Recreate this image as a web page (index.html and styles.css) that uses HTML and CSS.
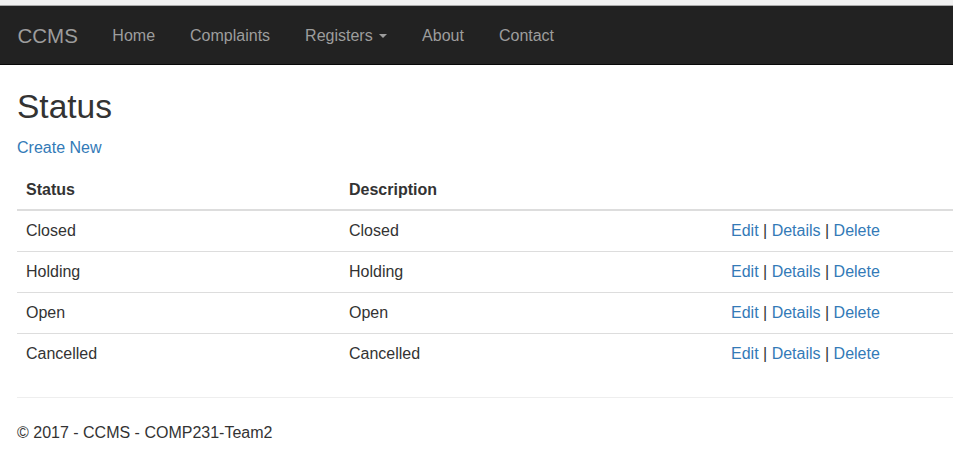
FILE: index.html
```html
<!DOCTYPE html>
<html>
<head>
<meta charset="utf-8">
<title>Status - CCMS</title>
<link rel="stylesheet" href="styles.css">
</head>
<body>
<div class="topstrip"></div>
<nav class="navbar">
  <a class="brand" href="#">CCMS</a>
  <ul class="nav">
    <li><a href="#">Home</a></li>
    <li><a href="#">Complaints</a></li>
    <li><a href="#">Registers <span class="caret"></span></a></li>
    <li><a href="#">About</a></li>
    <li><a href="#">Contact</a></li>
  </ul>
</nav>
<div class="container">
  <h1 class="title">Status</h1>
  <p class="create"><a href="#">Create New</a></p>
  <table class="table">
    <thead>
      <tr><th class="c1">Status</th><th class="c2">Description</th><th class="c3"></th></tr>
    </thead>
    <tbody>
      <tr><td>Closed</td><td>Closed</td><td><a href="#">Edit</a> | <a href="#">Details</a> | <a href="#">Delete</a></td></tr>
      <tr><td>Holding</td><td>Holding</td><td><a href="#">Edit</a> | <a href="#">Details</a> | <a href="#">Delete</a></td></tr>
      <tr><td>Open</td><td>Open</td><td><a href="#">Edit</a> | <a href="#">Details</a> | <a href="#">Delete</a></td></tr>
      <tr><td>Cancelled</td><td>Cancelled</td><td><a href="#">Edit</a> | <a href="#">Details</a> | <a href="#">Delete</a></td></tr>
    </tbody>
  </table>
  <hr class="rule">
  <footer class="footer"><p>&copy; 2017 - CCMS - COMP231-Team2</p></footer>
</div>
</body>
</html>
```
FILE: styles.css
```css
html, body {
  margin: 0;
  padding: 0;
  overflow: hidden;
}
body {
  font-family: "Liberation Sans", Arial, Helvetica, sans-serif;
  font-size: 16px;
  line-height: 22px;
  color: #333;
  background: #fff;
}
a {
  color: #337ab7;
  text-decoration: none;
}
.topstrip {
  height: 5px;
  background: #f1f1f1;
  border-bottom: 1px solid #a9a9a9;
}
.navbar {
  height: 57px;
  background: #222;
  border-top: 1px solid #222;
  border-bottom: 1px solid #080808;
  display: flex;
  align-items: center;
  padding-left: 17.5px;
}
.brand {
  color: #9d9d9d;
  font-size: 20.5px;
  line-height: 22px;
  padding-right: 17px;
}
.nav {
  list-style: none;
  margin: 0;
  padding: 0;
  display: flex;
}
.nav a {
  color: #9d9d9d;
  display: block;
  padding: 0 17.5px;
}
.caret {
  display: inline-block;
  width: 0;
  height: 0;
  margin-left: 2px;
  vertical-align: middle;
  border-top: 4.5px solid #9d9d9d;
  border-left: 4.5px solid transparent;
  border-right: 4.5px solid transparent;
}
.container {
  padding-left: 17px;
}
.title {
  margin: 24px 0 12px;
  font-size: 33.5px;
  line-height: 36px;
  font-weight: 500;
  color: #333;
}
.create {
  margin: 0 0 11px;
}
.table {
  width: 936px;
  border-collapse: collapse;
  border-spacing: 0;
  margin-bottom: 23px;
}
.table th,
.table td {
  padding: 9px;
  text-align: left;
  vertical-align: top;
  line-height: 22px;
}
.table th {
  font-weight: bold;
  padding-bottom: 8px;
  border-bottom: 2px solid #ddd;
}
.table td {
  border-top: 1px solid #ddd;
}
.c1 { width: 305px; }
.c2 { width: 364px; }
.rule {
  margin: 0 0 24px;
  border: 0;
  border-top: 1px solid #eee;
  width: 936px;
}
.footer p {
  margin: 0 0 11px;
}
```
